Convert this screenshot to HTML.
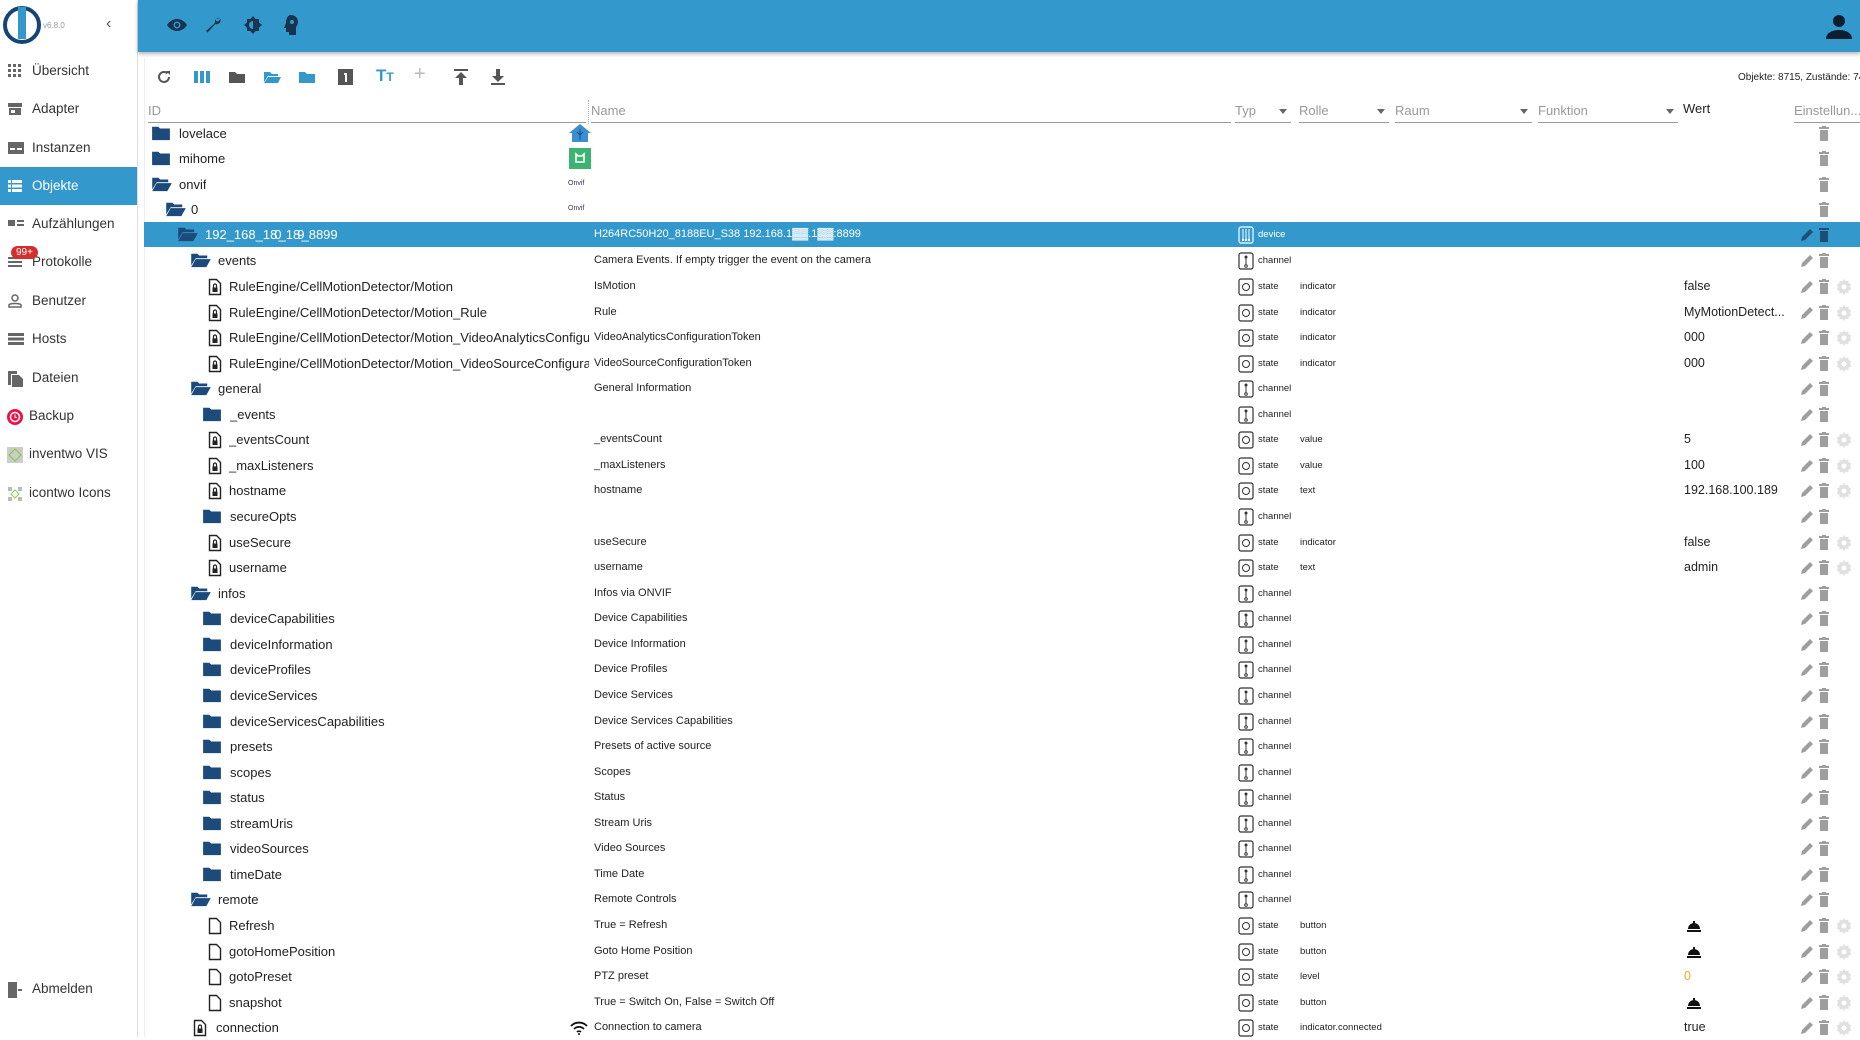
<!DOCTYPE html>
<html><head><meta charset="utf-8">
<style>
*{box-sizing:border-box;margin:0;padding:0}
body{width:1860px;height:1037px;overflow:hidden;background:#fff;font-family:"Liberation Sans",sans-serif;color:#222;position:relative}
.abs{position:absolute}
#side{left:0;top:0;width:138px;height:1037px;border-right:1px solid #ddd;background:#fff}
.nav{position:absolute;left:0;width:137px;height:38px;font-size:13.5px;color:#333;line-height:38px;padding-left:32px}
.nav svg{position:absolute;left:8px;top:12px}
.nav.act{background:#3399cc;color:#fff}
#hdr{left:138px;top:0;width:1722px;height:52px;background:#3399cc;box-shadow:0 2px 4px rgba(0,0,0,.3)}
.tb{position:absolute;top:69px}
.colh{position:absolute;top:103px;font-size:13px;color:#999;height:20px;border-bottom:1px solid #999}
.colh i{position:absolute;right:4px;top:6px;width:0;height:0;border-left:4px solid transparent;border-right:4px solid transparent;border-top:5px solid #666}
.row{position:absolute;left:144px;width:1716px;height:25px;font-size:13px}
.row.sel{background:#3399cc;color:#fff}
.row>*{position:absolute}
.t{top:0;line-height:25px;white-space:nowrap;overflow:hidden}
.nm{left:450px;font-size:11px;line-height:25px;top:0;white-space:nowrap}
.ti{left:1094px;top:4px}
.tt{left:1114px;font-size:9.5px;line-height:25px;top:0}
.rl{left:1156px;font-size:9.5px;line-height:25px;top:0}
.vl{left:1540px;font-size:12.5px;line-height:25px;top:0}
.pe{left:1656px;top:6px}.tr{left:1674px;top:5px}.ge{left:1692px;top:5px}
.i3{left:46px;top:4px}.x3{left:74px}
.i4{left:58px;top:4px}.x4{left:86px}
.f4{left:64px;top:4px}.y4{left:85px;width:360px}
</style></head><body>
<svg width="0" height="0" style="position:absolute">
<defs>
<symbol id="fc" viewBox="0 0 22 18"><path d="M1 2h7l2 2h11v13H1z" fill="#1b4a7b"/></symbol>
<symbol id="fo" viewBox="0 0 24 18"><path d="M1 2h7l2 2h9v3H6L1 15z" fill="#1b4a7b"/><path d="M6 8h17l-5 9H1z" fill="#1b4a7b"/></symbol>
<symbol id="fl" viewBox="0 0 14 18"><path d="M1.5 1.5h7l4 4v11h-11z" fill="none" stroke="#222" stroke-width="1.4"/><rect x="4.5" y="9.5" width="5" height="4.5" fill="#222"/><path d="M5.5 9.5v-2a1.5 1.5 0 0 1 3 0v2" fill="none" stroke="#222" stroke-width="1.2"/></symbol>
<symbol id="ff" viewBox="0 0 14 18"><path d="M1.5 1.5h7l4 4v11h-11z" fill="none" stroke="#222" stroke-width="1.4"/></symbol>
<symbol id="ch" viewBox="0 0 16 18"><rect x="1" y="1" width="14" height="16" rx="2" fill="none" stroke="#333" stroke-width="1.2"/><circle cx="8" cy="5" r="1.5" fill="#333"/><path d="M8 5v8" stroke="#333"/><circle cx="8" cy="14" r="1.3" fill="none" stroke="#333"/></symbol>
<symbol id="st" viewBox="0 0 16 18"><rect x="1" y="1" width="14" height="16" rx="2" fill="none" stroke="#333" stroke-width="1.2"/><circle cx="8" cy="9" r="3.5" fill="none" stroke="#333"/></symbol>
<symbol id="pe" viewBox="0 0 14 14"><path d="M1 13l1-4 8-8 3 3-8 8z" fill="#9e9e9e"/></symbol>
<symbol id="tr" viewBox="0 0 12 16"><rect x="1" y="1" width="10" height="2" fill="#9e9e9e"/><rect x="4" y="0" width="4" height="2" fill="#9e9e9e"/><rect x="2" y="4" width="8" height="11" fill="#9e9e9e"/></symbol>
<symbol id="ge" viewBox="0 0 16 16"><path d="M8 0l1.6 2.3 2.7-.8.3 2.8 2.6 1-1.2 2.6 1.2 2.6-2.6 1-.3 2.8-2.7-.8L8 16l-1.6-2.3-2.7.8-.3-2.8-2.6-1L2 8.1.8 5.5l2.6-1 .3-2.8 2.7.8z" fill="#e0e0e0"/><circle cx="8" cy="8" r="2.5" fill="#fff"/></symbol>
<symbol id="bl" viewBox="0 0 16 12"><path d="M2 9a6 6 0 0 1 12 0z" fill="#111"/><rect x="7" y="1" width="2" height="2" fill="#111"/><rect x="1" y="10" width="14" height="2" fill="#111"/></symbol>
</defs></svg>

<div id="side" class="abs">
<svg class="abs" style="left:2px;top:5px" width="40" height="40" viewBox="0 0 40 40"><circle cx="20" cy="20" r="17" fill="none" stroke="#164477" stroke-width="4"/><rect x="16" y="2" width="8" height="32" fill="#3399cc"/></svg>
<div class="abs" style="left:43px;top:21px;font-size:8px;color:#999">v6.8.0</div>
<div class="abs" style="left:106px;top:15px;font-size:16px;color:#555">&#8249;</div>
<div class="nav" style="top:52px"><svg width="14" height="14"><g fill="#666"><rect x="0" y="0" width="3" height="3"/><rect x="5" y="0" width="3" height="3"/><rect x="10" y="0" width="3" height="3"/><rect x="0" y="5" width="3" height="3"/><rect x="5" y="5" width="3" height="3"/><rect x="10" y="5" width="3" height="3"/><rect x="0" y="10" width="3" height="3"/><rect x="5" y="10" width="3" height="3"/><rect x="10" y="10" width="3" height="3"/></g></svg>Übersicht</div>
<div class="nav" style="top:90px"><svg width="14" height="14"><path d="M0 1h14v4H0zM1 6h12v7H1z" fill="#666"/><rect x="3" y="8" width="4" height="3" fill="#fff"/></svg>Adapter</div>
<div class="nav" style="top:129px"><svg width="16" height="14"><rect x="0" y="1" width="16" height="12" fill="#666"/><rect x="2" y="7" width="5" height="2" fill="#fff"/><rect x="9" y="7" width="5" height="2" fill="#fff"/></svg>Instanzen</div>
<div class="nav act" style="top:167px"><svg width="14" height="14"><g fill="#fff"><rect x="0" y="1" width="3" height="3"/><rect x="4" y="1" width="10" height="3"/><rect x="0" y="5.5" width="3" height="3"/><rect x="4" y="5.5" width="10" height="3"/><rect x="0" y="10" width="3" height="3"/><rect x="4" y="10" width="10" height="3"/></g></svg>Objekte</div>
<div class="nav" style="top:205px"><svg width="16" height="14"><rect x="0" y="3" width="7" height="6" fill="#666"/><rect x="9" y="3" width="7" height="2" fill="#666"/><rect x="9" y="7" width="7" height="2" fill="#666"/></svg>Aufzählungen</div>
<div class="nav" style="top:243px"><svg width="14" height="14"><g fill="#666"><rect y="2" width="14" height="2"/><rect y="6" width="14" height="2"/><rect y="10" width="14" height="2"/></g></svg>Protokolle</div>
<div class="abs" style="left:11px;top:246px;background:#d32f2f;color:#fff;font-size:10px;border-radius:9px;padding:1px 5px">99+</div>
<div class="nav" style="top:282px"><svg width="14" height="14"><circle cx="7" cy="4" r="3" fill="none" stroke="#666" stroke-width="1.5"/><path d="M1 13v-2c0-2 12-2 12 0v2z" fill="none" stroke="#666" stroke-width="1.5"/></svg>Benutzer</div>
<div class="nav" style="top:320px"><svg width="16" height="14"><g fill="#666"><rect y="1" width="16" height="3"/><rect y="5.5" width="16" height="3"/><rect y="10" width="16" height="3"/></g></svg>Hosts</div>
<div class="nav" style="top:359px"><svg width="16" height="16"><path d="M0 0h9v3H3v11H0z" fill="#666"/><path d="M4 4h7l4 4v8H4z" fill="#666"/></svg>Dateien</div>
<div class="nav" style="top:397px;padding-left:29px"><svg width="16" height="16" style="left:7px"><circle cx="8" cy="8" r="8" fill="#ee1144"/><circle cx="8" cy="8" r="4.5" fill="none" stroke="#fff" stroke-width="1.5"/><path d="M8 5.5v3h2" stroke="#fff" fill="none"/></svg>Backup</div>
<div class="nav" style="top:435px;padding-left:29px"><svg width="16" height="16" style="left:7px"><rect width="16" height="16" fill="#ccc"/><path d="M8 2l6 6-6 6-6-6z" fill="none" stroke="#8c4" stroke-width="1.2"/></svg>inventwo VIS</div>
<div class="nav" style="top:474px;padding-left:29px"><svg width="16" height="16" style="left:7px"><g fill="#bbb"><rect x="1" y="1" width="4" height="4"/><rect x="11" y="1" width="4" height="4"/><rect x="1" y="11" width="4" height="4"/><rect x="11" y="11" width="4" height="4"/></g><path d="M8 4l4 4-4 4-4-4z" fill="none" stroke="#8c4"/></svg>icontwo Icons</div>
<div class="nav" style="top:970px"><svg width="14" height="16"><path d="M0 0h9v16H0z" fill="#666"/><path d="M10 7h4v2h-4z" fill="#666"/></svg>Abmelden</div>
</div>

<div id="hdr" class="abs">
<svg class="abs" style="left:29px;top:18px" width="20" height="14" viewBox="0 0 20 14"><path d="M10 1C5 1 1.5 4.5 0 7c1.5 2.5 5 6 10 6s8.5-3.5 10-6c-1.5-2.5-5-6-10-6z" fill="#17344f"/><circle cx="10" cy="7" r="3.5" fill="#3399cc"/><circle cx="10" cy="7" r="2" fill="#17344f"/></svg>
<svg class="abs" style="left:66px;top:16px" width="18" height="18" viewBox="0 0 18 18"><path d="M16 2a4 4 0 0 0-5 5L2 15l1.5 1.5 8-8.5a4 4 0 0 0 5-5l-2.5 2.5-2-.5-.5-2z" fill="#17344f"/></svg>
<svg class="abs" style="left:106px;top:16px" width="18" height="18" viewBox="0 0 18 18"><path d="M9 0l2.5 3H15v3.5l3 2.5-3 2.5V15h-3.5L9 18l-2.5-3H3v-3.5L0 9l3-2.5V3h3.5z" fill="#17344f"/><circle cx="9" cy="9" r="4" fill="#3399cc"/><path d="M9 5a4 4 0 0 1 0 8z" fill="#17344f"/></svg>
<svg class="abs" style="left:145px;top:15px" width="16" height="20" viewBox="0 0 16 20"><path d="M8 0c4 0 7 3 7 7 0 3-2 4-2 6v7H6v-3H3v-4H1l2-5C3 3 5 0 8 0z" fill="#17344f"/><circle cx="9" cy="7" r="2" fill="#3399cc"/></svg>
<svg class="abs" style="left:1688px;top:14px" width="26" height="26" viewBox="0 0 26 26"><circle cx="13" cy="7" r="6" fill="#0d1f2f"/><path d="M0 25c0-6 6-9 13-9s13 3 13 9z" fill="#0d1f2f"/></svg>
</div>

<div class="abs" style="left:144px;top:58px;width:1716px;height:979px;border-left:1px solid #eee"></div>
<svg class="tb" style="left:156px" width="16" height="16" viewBox="0 0 16 16"><path d="M13 8a5 5 0 1 1-1.5-3.6" fill="none" stroke="#555" stroke-width="2"/><path d="M10 2h4v4z" fill="#555"/></svg>
<svg class="tb" style="left:194px" width="16" height="16"><g fill="#3399cc"><rect x="0" y="2" width="4" height="12"/><rect x="6" y="2" width="4" height="12"/><rect x="12" y="2" width="4" height="12"/></g></svg>
<svg class="tb" style="left:229px" width="16" height="16"><path d="M0 3h6l2 2h8v9H0z" fill="#555"/></svg>
<svg class="tb" style="left:264px" width="17" height="16"><path d="M0 3h6l2 2h6v2H4L0 13z" fill="#3399cc"/><path d="M4 8h13l-3 6H0z" fill="#3399cc"/></svg>
<svg class="tb" style="left:299px" width="16" height="16"><path d="M0 3h6l2 2h8v9H0z" fill="#3399cc"/></svg>
<svg class="tb" style="left:338px" width="15" height="16"><rect width="15" height="16" fill="#555"/><path d="M6 4h3v9H7V6H6z" fill="#fff"/></svg>
<div class="abs" style="left:376px;top:66px;font-size:17px;font-weight:bold;color:#3399cc">T<span style="font-size:12px">T</span></div>
<div class="abs" style="left:414px;top:63px;font-size:20px;color:#bbb">+</div>
<svg class="tb" style="left:454px" width="14" height="16"><rect width="14" height="2" fill="#555"/><path d="M7 3l6 6H9v7H5V9H1z" fill="#555"/></svg>
<svg class="tb" style="left:491px" width="14" height="16"><path d="M5 0h4v7h4l-6 6-6-6h4z" fill="#555"/><rect y="14" width="14" height="2" fill="#555"/></svg>
<div class="abs" style="left:1738px;top:72px;font-size:10px;color:#222;white-space:nowrap">Objekte: 8715, Zustände: 74</div>

<div class="colh" style="left:148px;width:438px">ID</div>
<div class="abs" style="left:588px;top:100px;height:24px;border-left:1px dotted #aaa"></div>
<div class="colh" style="left:591px;width:640px;color:#999">Name</div>
<div class="colh" style="left:1235px;width:56px">Typ<i></i></div>
<div class="colh" style="left:1299px;width:90px">Rolle<i></i></div>
<div class="colh" style="left:1395px;width:137px">Raum<i></i></div>
<div class="colh" style="left:1538px;width:140px">Funktion<i></i></div>
<div class="abs" style="left:1683px;top:101px;font-size:13px;color:#222">Wert</div>
<div class="colh" style="left:1794px;width:66px;overflow:hidden;white-space:nowrap">Einstellun...</div>

<div class="row" style="top:121px"><svg class="abs" style="left:7px;top:4px" width="20" height="16"><use href="#fc"/></svg><span class="t" style="left:35px">lovelace</span><svg class="abs" style="left:425px;top:3px" width="22" height="18" viewBox="0 0 22 18"><path d="M11 0l11 9h-3v9H3V9H0z" fill="#3a8fd0"/><path d="M11 5v11M8 8l3 3 3-3" stroke="#174a80" fill="none"/></svg><svg class="abs tr" width="12" height="16"><use href="#tr"/></svg></div>
<div class="row" style="top:146px"><svg class="abs" style="left:7px;top:4px" width="20" height="16"><use href="#fc"/></svg><span class="t" style="left:35px">mihome</span><svg class="abs" style="left:425px;top:2px" width="22" height="21"><rect width="22" height="21" fill="#3cb371"/><path d="M7 6v8h8V6l-2 2H9z" fill="none" stroke="#fff" stroke-width="1.6"/></svg><svg class="abs tr" width="12" height="16"><use href="#tr"/></svg></div>
<div class="row" style="top:172px"><svg class="abs" style="left:7px;top:4px" width="22" height="16"><use href="#fo"/></svg><span class="t" style="left:35px">onvif</span><span class="abs" style="left:424px;top:8px;font-size:7px;color:#335">Onvif</span><svg class="abs tr" width="12" height="16"><use href="#tr"/></svg></div>
<div class="row" style="top:197px"><svg class="abs" style="left:21px;top:4px" width="22" height="16"><use href="#fo"/></svg><span class="t" style="left:47px">0</span><span class="abs" style="left:424px;top:8px;font-size:7px;color:#335">Onvif</span><svg class="abs tr" width="12" height="16"><use href="#tr"/></svg></div>
<div class="row sel" style="top:222px"><svg class="abs" style="left:33px;top:4px" width="22" height="16"><use href="#fo"/></svg><span class="t" style="left:61px">192_168_1<b style="font-weight:normal;letter-spacing:-3px">80</b>_1<b style="font-weight:normal;letter-spacing:-3px">89</b>_8899</span><span class="nm">H264RC50H20_8188EU_S38 192.168.1▓▓.1▓▓:8899</span><svg class="abs ti" width="16" height="18" viewBox="0 0 16 18"><rect x="1" y="1" width="14" height="16" rx="2" fill="none" stroke="#fff" stroke-width="1.2"/><path d="M5 3v10M8 3v10M11 3v10" stroke="#fff"/><circle cx="5" cy="14" r="1.2" fill="#fff"/><circle cx="8" cy="14" r="1.2" fill="#fff"/><circle cx="11" cy="14" r="1.2" fill="#fff"/></svg><span class="tt" style="color:#fff">device</span><svg class="abs pe" width="14" height="14" viewBox="0 0 14 14"><path d="M1 13l1-4 8-8 3 3-8 8z" fill="#1d4f75"/></svg><svg class="abs tr" width="12" height="16" viewBox="0 0 12 16"><rect x="1" y="1" width="10" height="2" fill="#1d4f75"/><rect x="2" y="4" width="8" height="11" fill="#1d4f75"/></svg></div>

<div class="row" style="top:248px"><svg class="abs i3" width="22" height="16"><use href="#fo"/></svg><span class="t x3">events</span><span class="nm">Camera Events. If empty trigger the event on the camera</span><svg class="abs ti" width="16" height="18"><use href="#ch"/></svg><span class="tt">channel</span><svg class="abs pe" width="14" height="14"><use href="#pe"/></svg><svg class="abs tr" width="12" height="16"><use href="#tr"/></svg></div>
<div class="row" style="top:274px"><svg class="abs f4" width="14" height="18"><use href="#fl"/></svg><span class="t y4">RuleEngine/CellMotionDetector/Motion</span><span class="nm">IsMotion</span><svg class="abs ti" width="16" height="18"><use href="#st"/></svg><span class="tt">state</span><span class="rl">indicator</span><span class="vl">false</span><svg class="abs pe" width="14" height="14"><use href="#pe"/></svg><svg class="abs tr" width="12" height="16"><use href="#tr"/></svg><svg class="abs ge" width="16" height="16"><use href="#ge"/></svg></div>
<div class="row" style="top:300px"><svg class="abs f4" width="14" height="18"><use href="#fl"/></svg><span class="t y4">RuleEngine/CellMotionDetector/Motion_Rule</span><span class="nm">Rule</span><svg class="abs ti" width="16" height="18"><use href="#st"/></svg><span class="tt">state</span><span class="rl">indicator</span><span class="vl">MyMotionDetect...</span><svg class="abs pe" width="14" height="14"><use href="#pe"/></svg><svg class="abs tr" width="12" height="16"><use href="#tr"/></svg><svg class="abs ge" width="16" height="16"><use href="#ge"/></svg></div>
<div class="row" style="top:325px"><svg class="abs f4" width="14" height="18"><use href="#fl"/></svg><span class="t y4">RuleEngine/CellMotionDetector/Motion_VideoAnalyticsConfigu</span><span class="nm">VideoAnalyticsConfigurationToken</span><svg class="abs ti" width="16" height="18"><use href="#st"/></svg><span class="tt">state</span><span class="rl">indicator</span><span class="vl">000</span><svg class="abs pe" width="14" height="14"><use href="#pe"/></svg><svg class="abs tr" width="12" height="16"><use href="#tr"/></svg><svg class="abs ge" width="16" height="16"><use href="#ge"/></svg></div>
<div class="row" style="top:351px"><svg class="abs f4" width="14" height="18"><use href="#fl"/></svg><span class="t y4">RuleEngine/CellMotionDetector/Motion_VideoSourceConfigura</span><span class="nm">VideoSourceConfigurationToken</span><svg class="abs ti" width="16" height="18"><use href="#st"/></svg><span class="tt">state</span><span class="rl">indicator</span><span class="vl">000</span><svg class="abs pe" width="14" height="14"><use href="#pe"/></svg><svg class="abs tr" width="12" height="16"><use href="#tr"/></svg><svg class="abs ge" width="16" height="16"><use href="#ge"/></svg></div>
<div class="row" style="top:376px"><svg class="abs i3" width="22" height="16"><use href="#fo"/></svg><span class="t x3">general</span><span class="nm">General Information</span><svg class="abs ti" width="16" height="18"><use href="#ch"/></svg><span class="tt">channel</span><svg class="abs pe" width="14" height="14"><use href="#pe"/></svg><svg class="abs tr" width="12" height="16"><use href="#tr"/></svg></div>
<div class="row" style="top:402px"><svg class="abs i4" width="20" height="16"><use href="#fc"/></svg><span class="t x4">_events</span><svg class="abs ti" width="16" height="18"><use href="#ch"/></svg><span class="tt">channel</span><svg class="abs pe" width="14" height="14"><use href="#pe"/></svg><svg class="abs tr" width="12" height="16"><use href="#tr"/></svg></div>
<div class="row" style="top:427px"><svg class="abs f4" width="14" height="18"><use href="#fl"/></svg><span class="t y4">_eventsCount</span><span class="nm">_eventsCount</span><svg class="abs ti" width="16" height="18"><use href="#st"/></svg><span class="tt">state</span><span class="rl">value</span><span class="vl">5</span><svg class="abs pe" width="14" height="14"><use href="#pe"/></svg><svg class="abs tr" width="12" height="16"><use href="#tr"/></svg><svg class="abs ge" width="16" height="16"><use href="#ge"/></svg></div>
<div class="row" style="top:453px"><svg class="abs f4" width="14" height="18"><use href="#fl"/></svg><span class="t y4">_maxListeners</span><span class="nm">_maxListeners</span><svg class="abs ti" width="16" height="18"><use href="#st"/></svg><span class="tt">state</span><span class="rl">value</span><span class="vl">100</span><svg class="abs pe" width="14" height="14"><use href="#pe"/></svg><svg class="abs tr" width="12" height="16"><use href="#tr"/></svg><svg class="abs ge" width="16" height="16"><use href="#ge"/></svg></div>
<div class="row" style="top:478px"><svg class="abs f4" width="14" height="18"><use href="#fl"/></svg><span class="t y4">hostname</span><span class="nm">hostname</span><svg class="abs ti" width="16" height="18"><use href="#st"/></svg><span class="tt">state</span><span class="rl">text</span><span class="vl">192.168.100.189</span><svg class="abs pe" width="14" height="14"><use href="#pe"/></svg><svg class="abs tr" width="12" height="16"><use href="#tr"/></svg><svg class="abs ge" width="16" height="16"><use href="#ge"/></svg></div>
<div class="row" style="top:504px"><svg class="abs i4" width="20" height="16"><use href="#fc"/></svg><span class="t x4">secureOpts</span><svg class="abs ti" width="16" height="18"><use href="#ch"/></svg><span class="tt">channel</span><svg class="abs pe" width="14" height="14"><use href="#pe"/></svg><svg class="abs tr" width="12" height="16"><use href="#tr"/></svg></div>
<div class="row" style="top:530px"><svg class="abs f4" width="14" height="18"><use href="#fl"/></svg><span class="t y4">useSecure</span><span class="nm">useSecure</span><svg class="abs ti" width="16" height="18"><use href="#st"/></svg><span class="tt">state</span><span class="rl">indicator</span><span class="vl">false</span><svg class="abs pe" width="14" height="14"><use href="#pe"/></svg><svg class="abs tr" width="12" height="16"><use href="#tr"/></svg><svg class="abs ge" width="16" height="16"><use href="#ge"/></svg></div>
<div class="row" style="top:555px"><svg class="abs f4" width="14" height="18"><use href="#fl"/></svg><span class="t y4">username</span><span class="nm">username</span><svg class="abs ti" width="16" height="18"><use href="#st"/></svg><span class="tt">state</span><span class="rl">text</span><span class="vl">admin</span><svg class="abs pe" width="14" height="14"><use href="#pe"/></svg><svg class="abs tr" width="12" height="16"><use href="#tr"/></svg><svg class="abs ge" width="16" height="16"><use href="#ge"/></svg></div>
<div class="row" style="top:581px"><svg class="abs i3" width="22" height="16"><use href="#fo"/></svg><span class="t x3">infos</span><span class="nm">Infos via ONVIF</span><svg class="abs ti" width="16" height="18"><use href="#ch"/></svg><span class="tt">channel</span><svg class="abs pe" width="14" height="14"><use href="#pe"/></svg><svg class="abs tr" width="12" height="16"><use href="#tr"/></svg></div>
<div class="row" style="top:606px"><svg class="abs i4" width="20" height="16"><use href="#fc"/></svg><span class="t x4">deviceCapabilities</span><span class="nm">Device Capabilities</span><svg class="abs ti" width="16" height="18"><use href="#ch"/></svg><span class="tt">channel</span><svg class="abs pe" width="14" height="14"><use href="#pe"/></svg><svg class="abs tr" width="12" height="16"><use href="#tr"/></svg></div>
<div class="row" style="top:632px"><svg class="abs i4" width="20" height="16"><use href="#fc"/></svg><span class="t x4">deviceInformation</span><span class="nm">Device Information</span><svg class="abs ti" width="16" height="18"><use href="#ch"/></svg><span class="tt">channel</span><svg class="abs pe" width="14" height="14"><use href="#pe"/></svg><svg class="abs tr" width="12" height="16"><use href="#tr"/></svg></div>
<div class="row" style="top:657px"><svg class="abs i4" width="20" height="16"><use href="#fc"/></svg><span class="t x4">deviceProfiles</span><span class="nm">Device Profiles</span><svg class="abs ti" width="16" height="18"><use href="#ch"/></svg><span class="tt">channel</span><svg class="abs pe" width="14" height="14"><use href="#pe"/></svg><svg class="abs tr" width="12" height="16"><use href="#tr"/></svg></div>
<div class="row" style="top:683px"><svg class="abs i4" width="20" height="16"><use href="#fc"/></svg><span class="t x4">deviceServices</span><span class="nm">Device Services</span><svg class="abs ti" width="16" height="18"><use href="#ch"/></svg><span class="tt">channel</span><svg class="abs pe" width="14" height="14"><use href="#pe"/></svg><svg class="abs tr" width="12" height="16"><use href="#tr"/></svg></div>
<div class="row" style="top:709px"><svg class="abs i4" width="20" height="16"><use href="#fc"/></svg><span class="t x4">deviceServicesCapabilities</span><span class="nm">Device Services Capabilities</span><svg class="abs ti" width="16" height="18"><use href="#ch"/></svg><span class="tt">channel</span><svg class="abs pe" width="14" height="14"><use href="#pe"/></svg><svg class="abs tr" width="12" height="16"><use href="#tr"/></svg></div>
<div class="row" style="top:734px"><svg class="abs i4" width="20" height="16"><use href="#fc"/></svg><span class="t x4">presets</span><span class="nm">Presets of active source</span><svg class="abs ti" width="16" height="18"><use href="#ch"/></svg><span class="tt">channel</span><svg class="abs pe" width="14" height="14"><use href="#pe"/></svg><svg class="abs tr" width="12" height="16"><use href="#tr"/></svg></div>
<div class="row" style="top:760px"><svg class="abs i4" width="20" height="16"><use href="#fc"/></svg><span class="t x4">scopes</span><span class="nm">Scopes</span><svg class="abs ti" width="16" height="18"><use href="#ch"/></svg><span class="tt">channel</span><svg class="abs pe" width="14" height="14"><use href="#pe"/></svg><svg class="abs tr" width="12" height="16"><use href="#tr"/></svg></div>
<div class="row" style="top:785px"><svg class="abs i4" width="20" height="16"><use href="#fc"/></svg><span class="t x4">status</span><span class="nm">Status</span><svg class="abs ti" width="16" height="18"><use href="#ch"/></svg><span class="tt">channel</span><svg class="abs pe" width="14" height="14"><use href="#pe"/></svg><svg class="abs tr" width="12" height="16"><use href="#tr"/></svg></div>
<div class="row" style="top:811px"><svg class="abs i4" width="20" height="16"><use href="#fc"/></svg><span class="t x4">streamUris</span><span class="nm">Stream Uris</span><svg class="abs ti" width="16" height="18"><use href="#ch"/></svg><span class="tt">channel</span><svg class="abs pe" width="14" height="14"><use href="#pe"/></svg><svg class="abs tr" width="12" height="16"><use href="#tr"/></svg></div>
<div class="row" style="top:836px"><svg class="abs i4" width="20" height="16"><use href="#fc"/></svg><span class="t x4">videoSources</span><span class="nm">Video Sources</span><svg class="abs ti" width="16" height="18"><use href="#ch"/></svg><span class="tt">channel</span><svg class="abs pe" width="14" height="14"><use href="#pe"/></svg><svg class="abs tr" width="12" height="16"><use href="#tr"/></svg></div>
<div class="row" style="top:862px"><svg class="abs i4" width="20" height="16"><use href="#fc"/></svg><span class="t x4">timeDate</span><span class="nm">Time Date</span><svg class="abs ti" width="16" height="18"><use href="#ch"/></svg><span class="tt">channel</span><svg class="abs pe" width="14" height="14"><use href="#pe"/></svg><svg class="abs tr" width="12" height="16"><use href="#tr"/></svg></div>
<div class="row" style="top:887px"><svg class="abs i3" width="22" height="16"><use href="#fo"/></svg><span class="t x3">remote</span><span class="nm">Remote Controls</span><svg class="abs ti" width="16" height="18"><use href="#ch"/></svg><span class="tt">channel</span><svg class="abs pe" width="14" height="14"><use href="#pe"/></svg><svg class="abs tr" width="12" height="16"><use href="#tr"/></svg></div>
<div class="row" style="top:913px"><svg class="abs f4" width="14" height="18"><use href="#ff"/></svg><span class="t y4">Refresh</span><span class="nm">True = Refresh</span><svg class="abs ti" width="16" height="18"><use href="#st"/></svg><span class="tt">state</span><span class="rl">button</span><svg class="abs" style="left:1542px;top:7px" width="16" height="12"><use href="#bl"/></svg><svg class="abs pe" width="14" height="14"><use href="#pe"/></svg><svg class="abs tr" width="12" height="16"><use href="#tr"/></svg><svg class="abs ge" width="16" height="16"><use href="#ge"/></svg></div>
<div class="row" style="top:939px"><svg class="abs f4" width="14" height="18"><use href="#ff"/></svg><span class="t y4">gotoHomePosition</span><span class="nm">Goto Home Position</span><svg class="abs ti" width="16" height="18"><use href="#st"/></svg><span class="tt">state</span><span class="rl">button</span><svg class="abs" style="left:1542px;top:7px" width="16" height="12"><use href="#bl"/></svg><svg class="abs pe" width="14" height="14"><use href="#pe"/></svg><svg class="abs tr" width="12" height="16"><use href="#tr"/></svg><svg class="abs ge" width="16" height="16"><use href="#ge"/></svg></div>
<div class="row" style="top:964px"><svg class="abs f4" width="14" height="18"><use href="#ff"/></svg><span class="t y4">gotoPreset</span><span class="nm">PTZ preset</span><svg class="abs ti" width="16" height="18"><use href="#st"/></svg><span class="tt">state</span><span class="rl">level</span><span class="vl" style="color:#f5a623">0</span><svg class="abs pe" width="14" height="14"><use href="#pe"/></svg><svg class="abs tr" width="12" height="16"><use href="#tr"/></svg><svg class="abs ge" width="16" height="16"><use href="#ge"/></svg></div>
<div class="row" style="top:990px"><svg class="abs f4" width="14" height="18"><use href="#ff"/></svg><span class="t y4">snapshot</span><span class="nm">True = Switch On, False = Switch Off</span><svg class="abs ti" width="16" height="18"><use href="#st"/></svg><span class="tt">state</span><span class="rl">button</span><svg class="abs" style="left:1542px;top:7px" width="16" height="12"><use href="#bl"/></svg><svg class="abs pe" width="14" height="14"><use href="#pe"/></svg><svg class="abs tr" width="12" height="16"><use href="#tr"/></svg><svg class="abs ge" width="16" height="16"><use href="#ge"/></svg></div>
<div class="row" style="top:1015px"><svg class="abs" style="left:49px;top:4px" width="14" height="18"><use href="#fl"/></svg><span class="t" style="left:72px">connection</span><svg class="abs" style="left:426px;top:6px" width="18" height="14" viewBox="0 0 18 14"><path d="M1 5a11 11 0 0 1 16 0M4 8a7 7 0 0 1 10 0M7 11a3 3 0 0 1 4 0" stroke="#111" stroke-width="1.8" fill="none"/><circle cx="9" cy="13" r="1" fill="#111"/></svg><span class="nm">Connection to camera</span><svg class="abs ti" width="16" height="18"><use href="#st"/></svg><span class="tt">state</span><span class="rl">indicator.connected</span><span class="vl">true</span><svg class="abs pe" width="14" height="14"><use href="#pe"/></svg><svg class="abs tr" width="12" height="16"><use href="#tr"/></svg><svg class="abs ge" width="16" height="16"><use href="#ge"/></svg></div>
</body></html>
